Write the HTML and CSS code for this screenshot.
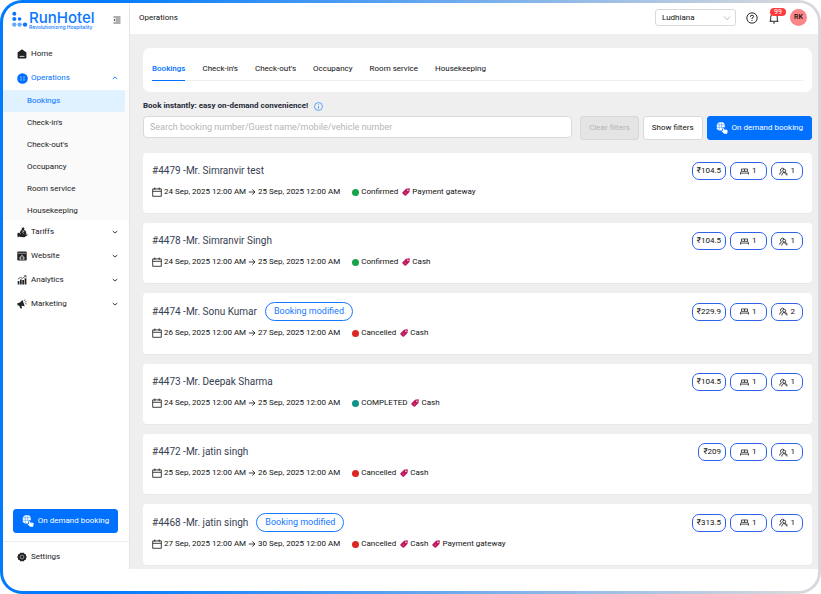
FILE: index.html
```html
<!DOCTYPE html>
<html lang="en">
<head>
<meta charset="UTF-8">
<meta name="viewport" content="width=device-width,initial-scale=1">
<title>RunHotel - Bookings</title>
<link rel="stylesheet" href="styles.css">
</head>
<body>

<!-- icons -->
<svg class="sprite" aria-hidden="true">
  <symbol id="i-cal" viewBox="0 0 10 10"><path d="M.7 1.9h8.6v7.400H.7zM.7 4.300h8.600M2.800.5v2.400M7.200.5v2.400" fill="none" stroke="currentColor" stroke-width=".8"/></symbol>
  <symbol id="i-arrow" viewBox="0 0 8 8"><path d="M.8 4h6M4.300 1.400 7 4 4.300 6.600" fill="none" stroke="currentColor" stroke-width=".8"/></symbol>
  <symbol id="i-tag" viewBox="0 0 8 8"><path d="M4 .7 7.200.3Q7.900.3 7.800 1L7.500 4 4 7.500Q3.300 8.100 2.600 7.500L.5 5.400Q0 4.700.5 4.200z" fill="currentColor"/><circle cx="5.900" cy="2.200" r=".7" fill="#fff"/><path d="m2.800 4.500 1.200 1.200" stroke="#fff" stroke-width=".4"/></symbol>
  <symbol id="i-bed" viewBox="0 0 10 8"><path d="M1.600 3.800V1.200h6.800v2.600M5 1.200v2.600M.6 7.400V5.200L1.600 3.800h6.800l1 1.400v2.200M.6 5.800h8.800" fill="none" stroke="currentColor" stroke-width=".8"/></symbol>
  <symbol id="i-guest" viewBox="0 0 9 9"><path d="M2 4.600A1.900 1.900 0 1 1 5 1.900M.6 7.600Q.7 5.400 2.800 4.900" fill="none" stroke="currentColor" stroke-width=".8"/><circle cx="5.200" cy="3.700" r="1.500" fill="none" stroke="currentColor" stroke-width=".8"/><path d="M2.700 8.500Q2.900 5.800 5 5.400L8.300 8.500M6.300 5.400Q8 6 8.300 7.400" fill="none" stroke="currentColor" stroke-width=".8"/></symbol>
  <symbol id="i-down" viewBox="0 0 6 6"><path d="m.8 2 2.200 2.100L5.200 2" fill="none" stroke="currentColor" stroke-width=".9"/></symbol>
  <symbol id="i-book" viewBox="0 0 12 12"><path d="M.8 2.200 3 .3h4L8.800 2.200v3.400L7.400 5 6 5v3.400H3L.8 7z" fill="currentColor"/><path d="M3.200.5v7.800M5.600.5v5.200M.5 2.700h8.500M.5 5.300h5.400" stroke="#0071ff" stroke-width=".4"/><path d="M6.300 5.200q.7-.4 1 .3l.8 2 2.600.3q1.200.3.9 1.500l-.5 2.500H8.200L5.600 9.300q.1-.9 1.500-.4z" fill="currentColor"/></symbol>
</svg>

<div class="frame">
<div class="app">

  <aside class="sidebar">
    <div class="brand">
      <svg class="logo-dots" viewBox="0 0 16 17" aria-hidden="true">
        <g fill="#0876ff"><circle cx="2.300" cy="2.700" r="2"/><circle cx="2.300" cy="8" r="2"/><circle cx="7.600" cy="8" r="1.800"/><circle cx="13" cy="13.600" r="2.200"/></g>
        <g fill="#6aa9fa"><circle cx="2.300" cy="13.600" r="2.200"/><circle cx="7.600" cy="13.600" r="2.200"/></g>
      </svg>
      <div class="logo">
        <strong>RunHotel</strong>
        <small>Revolutionizing Hospitality</small>
      </div>
      <button class="fold" aria-label="Collapse menu">
        <svg viewBox="0 0 8 8"><path d="M.5 1h7M3 3h4.500M3 5h4.500M.5 7h7" stroke="currentColor" stroke-width=".8"/><path d="M2.200 2.500v3L.5 4z" fill="currentColor"/></svg>
      </button>
    </div>

    <nav class="menu">
      <a href="#" class="item">
        <svg class="ico" viewBox="0 0 10 10"><path d="M5 .3 9.400 3.600v5q0 .9-.9.9h-7q-.9 0-.9-.9v-5z" fill="currentColor"/><path d="M2.600 7.400h4.800" stroke="#fff" stroke-width=".8"/></svg>
        <span>Home</span>
      </a>
      <a href="#" class="item open">
        <svg class="ico big" viewBox="0 0 11 11"><circle cx="5.500" cy="5.500" r="5.300" fill="currentColor"/><path d="M3.200 3.300h1.700v2H3.200zM6.100 3.300h1.700v2H6.100zM3.200 5.800h1.700v2H3.200zM6.100 5.800h1.700v2H6.100z" fill="#5aa5ff"/></svg>
        <span>Operations</span>
        <svg class="caret up"><use href="#i-down"/></svg>
      </a>
      <div class="submenu">
        <a href="#" class="active">Bookings</a>
        <a href="#">Check-in's</a>
        <a href="#">Check-out's</a>
        <a href="#">Occupancy</a>
        <a href="#">Room service</a>
        <a href="#">Housekeeping</a>
      </div>
      <a href="#" class="item">
        <svg class="ico big" viewBox="0 0 11 11"><path d="M4.600 1.600 6.200.3l1.300.9-.6 1.200q2.700 1.300 2.500 4.200L8.300 8.200H4.200L3 5.600q.1-2 1.900-3z" fill="currentColor"/><path d="M.3 6.400 2 5.600l2.200 2 3.400.5 2.600-.8.5.7-3.300 2.300-3.800-.4L2 9.400.7 10.500z" fill="currentColor"/><path d="M5.200 3.800h2.200M5.200 4.800h2.200M6 3.800q1.400.9-.5 1.800l1.500 1.500" fill="none" stroke="#fff" stroke-width=".4"/></svg>
        <span>Tariffs</span>
        <svg class="caret"><use href="#i-down"/></svg>
      </a>
      <a href="#" class="item">
        <svg class="ico" viewBox="0 0 10 10"><rect x=".3" y=".5" width="9.400" height="9" rx="1" fill="currentColor"/><path d="M.8 2.300h8.400" stroke="#fff" stroke-width=".5"/><path d="M2.500 6.200 5 3.500l2.500 2.700V8.800h-5z" fill="#aaa"/><path d="M4.300 5.500h1.400v3H4.300z" fill="currentColor"/></svg>
        <span>Website</span>
        <svg class="caret"><use href="#i-down"/></svg>
      </a>
      <a href="#" class="item">
        <svg class="ico" viewBox="0 0 10 10"><path d="M.7 6h1.700v3.500H.7zM3 4.600h1.700v4.900H3zM5.300 5.100H7v4.400H5.300zM7.600 3.200h1.800v6.300H7.600z" fill="currentColor"/><path d="m.8 4.200 2.600-1.900 2 1.100L8.800.9M7.200.8h1.900v1.600" fill="none" stroke="currentColor" stroke-width=".7"/></svg>
        <span>Analytics</span>
        <svg class="caret"><use href="#i-down"/></svg>
      </a>
      <a href="#" class="item">
        <svg class="ico" viewBox="0 0 10 10"><path d="M.3 4.200 3 3.400 5.600.9l2.100 6.400-3.300-.5.7 2.400-1.600.3-1.400-3L.6 6.400z" fill="currentColor"/><path d="M7 2 8 .5M7.800 3.300l1.700-.8M8.100 4.700l1.500.2" stroke="currentColor" stroke-width=".7"/></svg>
        <span>Marketing</span>
        <svg class="caret"><use href="#i-down"/></svg>
      </a>
    </nav>

    <button class="btn primary side-btn"><svg><use href="#i-book"/></svg>On demand booking</button>
    <div class="side-foot">
      <a href="#" class="item">
        <svg class="ico" viewBox="0 0 10 10"><path d="m3.700.5 1.300.4L6.300.5l1 1.200 1.500.6.2 1.500.8 1.200-.8 1.200-.2 1.500-1.500.6-1 1.200L5 9.100l-1.300.4-1-1.200-1.500-.6L1 6.200.2 5 1 3.800l.2-1.500 1.500-.6z" fill="currentColor"/><circle cx="5" cy="5" r="1.900" fill="none" stroke="#bbb" stroke-width=".7"/></svg>
        <span>Settings</span>
      </a>
    </div>
  </aside>

  <div class="content">
    <header class="topbar">
      <h1>Operations</h1>
      <div class="picker">
        <select aria-label="Property"><option>Ludhiana</option></select>
        <svg viewBox="0 0 8 8"><path d="m1 2.300 3 3.600 3-3.600" fill="none" stroke="currentColor" stroke-width=".7"/></svg>
      </div>
      <button class="icon-btn" aria-label="Help">
        <svg viewBox="0 0 12 12"><circle cx="6" cy="6" r="5.200" fill="none" stroke="currentColor" stroke-width=".9"/><path d="M4.400 4.800q0-1.600 1.600-1.600t1.600 1.400Q7.600 5.500 6 6.100V7" fill="none" stroke="currentColor" stroke-width=".9"/><circle cx="6" cy="8.500" r=".6" fill="currentColor"/></svg>
      </button>
      <button class="icon-btn bell" aria-label="Notifications">
        <svg viewBox="0 0 12 12"><path d="M2.700 9.200V5q0-3.200 3.300-3.200T9.300 5v4.200M1.500 9.300h9M6 .7v1.100M5 10.900h2" fill="none" stroke="currentColor" stroke-width=".9"/></svg>
        <span class="count">99</span>
      </button>
      <span class="avatar">RK</span>
    </header>

    <main>
      <section class="tabs-card">
        <nav class="tabs">
          <a href="#" class="active">Bookings</a>
          <a href="#">Check-in's</a>
          <a href="#">Check-out's</a>
          <a href="#">Occupancy</a>
          <a href="#">Room service</a>
          <a href="#">Housekeeping</a>
        </nav>
      </section>

      <div class="search-title">
        <label for="search">Book instantly: easy on-demand convenience!</label>
        <svg viewBox="0 0 10 10"><circle cx="5" cy="5" r="4.400" fill="none" stroke="currentColor" stroke-width=".8"/><path d="M5 4.400v3M5 2.600v.9" stroke="currentColor" stroke-width=".8"/></svg>
      </div>
      <div class="filters">
        <input id="search" type="text" placeholder="Search booking number/Guest name/mobile/vehicle number">
        <button class="btn" disabled>Clear filters</button>
        <button class="btn">Show filters</button>
        <button class="btn primary"><svg><use href="#i-book"/></svg>On demand booking</button>
      </div>

      <div class="list">
        <article class="card">
          <div class="head">
            <h2>#4479 -Mr. Simranvir test</h2>
            <span class="chip price">₹104.5</span>
            <span class="chip rooms"><svg><use href="#i-bed"/></svg>1</span>
            <span class="chip"><svg><use href="#i-guest"/></svg>1</span>
          </div>
          <div class="meta">
            <svg class="cal"><use href="#i-cal"/></svg>
            <span class="dates">24 Sep, 2025 12:00 AM <svg><use href="#i-arrow"/></svg> 25 Sep, 2025 12:00 AM</span>
            <span class="status confirmed">Confirmed</span>
            <span class="pay"><svg><use href="#i-tag"/></svg>Payment gateway</span>
          </div>
        </article>

        <article class="card">
          <div class="head">
            <h2>#4478 -Mr. Simranvir Singh</h2>
            <span class="chip price">₹104.5</span>
            <span class="chip rooms"><svg><use href="#i-bed"/></svg>1</span>
            <span class="chip"><svg><use href="#i-guest"/></svg>1</span>
          </div>
          <div class="meta">
            <svg class="cal"><use href="#i-cal"/></svg>
            <span class="dates">24 Sep, 2025 12:00 AM <svg><use href="#i-arrow"/></svg> 25 Sep, 2025 12:00 AM</span>
            <span class="status confirmed">Confirmed</span>
            <span class="pay"><svg><use href="#i-tag"/></svg>Cash</span>
          </div>
        </article>

        <article class="card">
          <div class="head">
            <h2>#4474 -Mr. Sonu Kumar <span class="modified">Booking modified</span></h2>
            <span class="chip price">₹229.9</span>
            <span class="chip rooms"><svg><use href="#i-bed"/></svg>1</span>
            <span class="chip"><svg><use href="#i-guest"/></svg>2</span>
          </div>
          <div class="meta">
            <svg class="cal"><use href="#i-cal"/></svg>
            <span class="dates">26 Sep, 2025 12:00 AM <svg><use href="#i-arrow"/></svg> 27 Sep, 2025 12:00 AM</span>
            <span class="status cancelled">Cancelled</span>
            <span class="pay"><svg><use href="#i-tag"/></svg>Cash</span>
          </div>
        </article>

        <article class="card">
          <div class="head">
            <h2>#4473 -Mr. Deepak Sharma</h2>
            <span class="chip price">₹104.5</span>
            <span class="chip rooms"><svg><use href="#i-bed"/></svg>1</span>
            <span class="chip"><svg><use href="#i-guest"/></svg>1</span>
          </div>
          <div class="meta">
            <svg class="cal"><use href="#i-cal"/></svg>
            <span class="dates">24 Sep, 2025 12:00 AM <svg><use href="#i-arrow"/></svg> 25 Sep, 2025 12:00 AM</span>
            <span class="status completed">COMPLETED</span>
            <span class="pay"><svg><use href="#i-tag"/></svg>Cash</span>
          </div>
        </article>

        <article class="card">
          <div class="head">
            <h2>#4472 -Mr. jatin singh</h2>
            <span class="chip price">₹209</span>
            <span class="chip rooms"><svg><use href="#i-bed"/></svg>1</span>
            <span class="chip"><svg><use href="#i-guest"/></svg>1</span>
          </div>
          <div class="meta">
            <svg class="cal"><use href="#i-cal"/></svg>
            <span class="dates">25 Sep, 2025 12:00 AM <svg><use href="#i-arrow"/></svg> 26 Sep, 2025 12:00 AM</span>
            <span class="status cancelled">Cancelled</span>
            <span class="pay"><svg><use href="#i-tag"/></svg>Cash</span>
          </div>
        </article>

        <article class="card">
          <div class="head">
            <h2>#4468 -Mr. jatin singh <span class="modified">Booking modified</span></h2>
            <span class="chip price">₹313.5</span>
            <span class="chip rooms"><svg><use href="#i-bed"/></svg>1</span>
            <span class="chip"><svg><use href="#i-guest"/></svg>1</span>
          </div>
          <div class="meta">
            <svg class="cal"><use href="#i-cal"/></svg>
            <span class="dates">27 Sep, 2025 12:00 AM <svg><use href="#i-arrow"/></svg> 30 Sep, 2025 12:00 AM</span>
            <span class="status cancelled">Cancelled</span>
            <span class="pay"><svg><use href="#i-tag"/></svg>Cash</span>
            <span class="pay"><svg><use href="#i-tag"/></svg>Payment gateway</span>
          </div>
        </article>
      </div>
    </main>
  </div>

</div>
</div>
</body>
</html>
```
FILE: styles.css
```css
*{margin:0;padding:0;box-sizing:border-box}
body{background:#fff;font-family:Roboto,"Liberation Sans",sans-serif;font-size:8px;line-height:12px;color:#111}
a{color:inherit;text-decoration:none}
button,input,select{font:inherit;color:inherit}
button{cursor:pointer}
svg{display:block;flex:none}
.sprite{position:absolute;width:0;height:0}

/* outer frame */
.frame{min-height:100vh;padding:3px;border-radius:22px;background:linear-gradient(90deg,#007aff 12%,#d8d9dc 97%);display:flex}
.app{flex:1;min-width:0;background:#fff;border-radius:19px;overflow:hidden;display:flex;padding-bottom:22px}

/* sidebar */
.sidebar{width:127px;flex:none;border-right:1px solid #e6e6e6;display:flex;flex-direction:column}
.brand{display:flex;align-items:flex-start;gap:1px;height:39px;padding:8px 8px 0 9px}
.logo-dots{width:16px;height:17px}
.logo{flex:1;color:#0876ff;font-family:Inter,sans-serif}
.logo strong{display:block;font-size:15px;line-height:14px;font-weight:500}
.logo small{display:block;font-size:5px;line-height:5px;font-weight:500}
.fold{border:0;background:none;color:#333;padding-top:5px}
.fold svg{width:8px;height:8px}
.item{display:flex;align-items:center;height:24px;padding:0 11px 0 14px;color:#222}
.item span{flex:1}
.ico{width:10px;height:10px;margin-right:4px}
.ico.big{width:11px;height:11px;margin-right:3px}
.caret{width:6px;height:6px}
.caret.up{transform:rotate(180deg)}
.item.open{color:#0071ff}
.submenu{height:130px;padding-bottom:1px;background:#fafafa;display:flex;flex-direction:column;justify-content:space-between}
.submenu a{padding:5px 0 5px 24px;color:#222;border-radius:0 2px 2px 0;margin-right:4px}
.submenu a.active{background:#e0f2ff;color:#0071ff}
.side-btn{margin:auto 11px 8px 10px}
.side-foot{border-top:1px solid #eee;padding-top:3px}

/* buttons */
.btn{display:flex;align-items:center;justify-content:center;height:24px;padding:0 8px;border:1px solid #d9d9d9;border-radius:3px;background:#fff;white-space:nowrap}
.btn:disabled{background:#e4e4e4;color:#b4b4b4;cursor:default}
.btn.primary{background:#0071ff;border-color:#0071ff;color:#fff}
.btn svg{width:12px;height:12px;margin-right:4px}

/* top bar */
.content{flex:1;min-width:0;display:flex;flex-direction:column}
.topbar{display:flex;align-items:center;height:31px;padding:0 11px 2px 9px;background:#fff}
.topbar h1{flex:1;font-size:8px;font-weight:400}
.picker{display:grid;align-items:center;width:81px;margin-right:10px}
.picker>*{grid-area:1/1}
.picker select{appearance:none;width:100%;height:17px;padding:0 6px;border:1px solid #d9d9d9;border-radius:3px;background:#fff}
.picker svg{width:8px;height:8px;justify-self:end;margin-right:5px;color:#aaa;pointer-events:none}
.icon-btn{position:relative;border:0;background:none;margin-right:10px}
.icon-btn svg{width:12px;height:12px}
.count{position:absolute;left:2px;top:-4px;padding:0 4px;border-radius:4px;background:#ff3b3e;color:#fff;font-size:7px;line-height:8px}
.avatar{width:17px;height:17px;border-radius:50%;background:#fb8587;font-size:7px;line-height:17px;font-weight:500;text-align:center}

/* main area */
main{flex:1;background:#efefef;padding:14px 6px 4px 13px}
.tabs-card{background:#fff;border-radius:7px;padding:12px 9px 11px}
.tabs{display:flex;gap:17px;border-bottom:1px solid #eee}
.tabs a{padding:3px 0 5px;border-bottom:1px solid transparent;margin-bottom:-1px}
.tabs a.active{color:#0071ff;border-color:#0071ff;font-weight:500}
.search-title{display:flex;align-items:center;gap:6px;padding:8px 0 4px;font-weight:700;color:#1f2937}
.search-title svg{width:9px;height:9px;color:#2b8cf5}
.filters{display:flex;gap:4px;margin-bottom:13px}
.filters input{flex:1;min-width:0;height:22px;margin-right:4px;padding:0 6px;border:1px solid #d9d9d9;border-radius:4px;background:#fff;font-size:9px}
.filters input::placeholder{color:#b5b5b5;opacity:1}

/* booking cards */
.list{display:flex;flex-direction:column;gap:10px}
.card{background:#fff;border-radius:4px;padding:9px 9px 15px;box-shadow:0 1px 1px rgba(0,0,0,.03)}
.head{display:flex;align-items:center;gap:4px}
.head h2{flex:1;display:flex;align-items:center;gap:8px;font-size:10px;font-weight:400;color:#374151}
.modified{height:19px;padding:0 8px;border:1px solid #1677ff;border-radius:10px;color:#1677ff;font-size:9px;line-height:17px}
.chip{display:flex;align-items:center;gap:3px;height:18px;padding:0 7px;border:1px solid #2f62e8;border-radius:7px}
.chip.price{padding:0 4px}
.chip.rooms{padding:0 9px}
.chip svg{width:9px;height:9px}
.meta{display:flex;align-items:center;margin-top:6px}
.cal{width:10px;height:10px;margin-right:2px}
.dates{display:flex;align-items:center;gap:2px;margin-right:12px}
.dates svg{width:8px;height:8px}
.status{display:flex;align-items:center;gap:2px}
.status::before{content:"";width:7px;height:7px;border-radius:50%;background:currentColor}
.status.confirmed::before{background:#16a34a}
.status.cancelled::before{background:#dc2626}
.status.completed::before{background:#0d9488}
.pay{display:flex;align-items:center;gap:2px;margin-left:4px}
.pay svg{width:8px;height:8px;color:#be185d}
```
